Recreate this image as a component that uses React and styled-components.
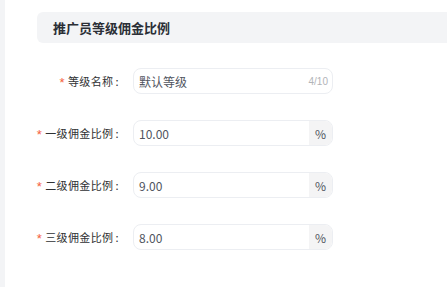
import React from "react";
import styled, { createGlobalStyle } from "styled-components";

const GlobalStyle = createGlobalStyle`
  body {
    margin: 0;
    background: #ffffff;
    font-family: "Noto Sans CJK SC", "Liberation Sans", sans-serif;
  }
`;

const Page = styled.div`
  display: flex;
  height: 287px;
  overflow: hidden;
`;

const SideStrip = styled.div`
  width: 5px;
  flex-shrink: 0;
  background: #f3f4f6;
`;

const Main = styled.div`
  flex: 1;
  padding-top: 12px;
`;

const SectionTitle = styled.div`
  margin-left: 32px;
  height: 31px;
  display: flex;
  align-items: center;
  padding-left: 16px;
  background: #f3f4f6;
  border-radius: 6px 0 0 6px;
  font-size: 13px;
  font-weight: 700;
  color: #2b2f36;
`;

const Form = styled.div`
  display: flex;
  flex-direction: column;
  gap: 26px;
  padding-top: 25px;
`;

const Row = styled.div`
  display: flex;
  align-items: center;
  height: 26px;
`;

const Label = styled.div`
  width: 128px;
  flex-shrink: 0;
  padding-right: 14px;
  box-sizing: border-box;
  display: flex;
  align-items: center;
  justify-content: flex-end;
  font-size: 11px;
  letter-spacing: 0.4px;
  color: #303133;
  white-space: nowrap;
`;

const Star = styled.span`
  color: #f5603c;
  font-size: 13px;
  margin-right: 3px;
  font-family: "Liberation Sans", sans-serif;
  line-height: 1;
  padding-top: 3px;
`;

const Colon = styled.span`
  margin-left: 2px;
`;

const InputBox = styled.div`
  width: 200px;
  height: 26px;
  box-sizing: border-box;
  border: 1px solid #eceef2;
  border-radius: 8px;
  display: flex;
  align-items: center;
  overflow: hidden;
`;

const Value = styled.span`
  flex: 1;
  padding-left: 5px;
  font-size: 12px;
  color: #50545e;
`;

const Counter = styled.span`
  padding-right: 4px;
  font-size: 10px;
  color: #b2b4b8;
  font-family: "Liberation Sans", sans-serif;
`;

const Append = styled.span`
  width: 23px;
  height: 100%;
  display: flex;
  align-items: center;
  justify-content: center;
  background: #f4f4f5;
  font-size: 12px;
  color: #50545e;
`;

const rates = [
  { label: "一级佣金比例", value: "10.00" },
  { label: "二级佣金比例", value: "9.00" },
  { label: "三级佣金比例", value: "8.00" },
];

export default function App() {
  return (
    <Page>
      <GlobalStyle />
      <SideStrip />
      <Main>
        <SectionTitle>推广员等级佣金比例</SectionTitle>
        <Form>
          <Row>
            <Label>
              <Star>*</Star>等级名称<Colon>:</Colon>
            </Label>
            <InputBox>
              <Value>默认等级</Value>
              <Counter>4/10</Counter>
            </InputBox>
          </Row>
          {rates.map((r) => (
            <Row key={r.label}>
              <Label>
                <Star>*</Star>
                {r.label}
                <Colon>:</Colon>
              </Label>
              <InputBox>
                <Value>{r.value}</Value>
                <Append>%</Append>
              </InputBox>
            </Row>
          ))}
        </Form>
      </Main>
    </Page>
  );
}
